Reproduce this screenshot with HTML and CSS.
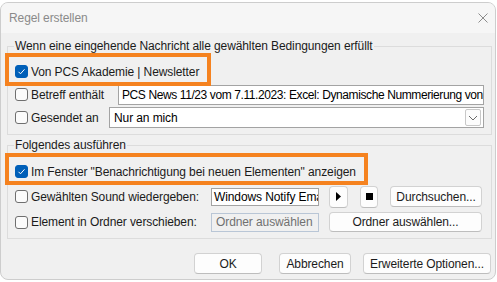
FILE: index.html
```html
<!DOCTYPE html>
<html lang="de">
<head>
<meta charset="utf-8">
<title>Regel erstellen</title>
<link rel="stylesheet" href="styles.css">
</head>
<body>
<div class="window">
  <div class="titlebar">
    <span class="title">Regel erstellen</span>
    <svg class="close" width="10" height="10" viewBox="0 0 10 10"><path d="M0.5 0.5 L9.5 9.5 M9.5 0.5 L0.5 9.5" stroke="#8c8c8c" stroke-width="1" fill="none"/></svg>
  </div>
  <div class="content">
    <fieldset class="group g1">
      <legend>Wenn eine eingehende Nachricht alle gewählten Bedingungen erfüllt</legend>
      <div class="row">
        <span class="cb checked"><svg width="13" height="13" viewBox="0 0 13 13"><path d="M3.5 6.8 L5.5 8.8 L9.5 4.3" stroke="#fff" stroke-width="1" fill="none"/></svg></span>
        <span class="label">Von PCS Akademie | Newsletter</span>
      </div>
      <div class="row">
        <span class="cb"></span>
        <span class="label w-betreff">Betreff enthält</span>
        <div class="textbox tb-betreff">PCS News 11/23 vom 7.11.2023: Excel: Dynamische Nummerierung von Zeilen</div>
      </div>
      <div class="row">
        <span class="cb"></span>
        <span class="label w-gesendet">Gesendet an</span>
        <div class="combo">
          <span class="combo-text">Nur an mich</span>
          <span class="dd"><svg width="10" height="6" viewBox="0 0 10 6"><path d="M1 1 L5 5 L9 1" stroke="#6a6a6a" stroke-width="1" fill="none"/></svg></span>
        </div>
      </div>
    </fieldset>
    <fieldset class="group g2">
      <legend>Folgendes ausführen</legend>
      <div class="row">
        <span class="cb checked"><svg width="13" height="13" viewBox="0 0 13 13"><path d="M3.5 6.8 L5.5 8.8 L9.5 4.3" stroke="#fff" stroke-width="1" fill="none"/></svg></span>
        <span class="label">Im Fenster "Benachrichtigung bei neuen Elementen" anzeigen</span>
      </div>
      <div class="row row-sound">
        <span class="cb"></span>
        <span class="label w-action">Gewählten Sound wiedergeben:</span>
        <div class="textbox tb-small">Windows Notify Email</div>
        <button class="btn btn-icon btn-play"><svg width="5" height="9" viewBox="0 0 5 9"><path d="M0 0 L5 4.5 L0 9 Z" fill="#000"/></svg></button>
        <button class="btn btn-icon btn-stop"><span class="stop-sq"></span></button>
        <button class="btn btn-browse">Durchsuchen...</button>
      </div>
      <div class="row row-folder">
        <span class="cb"></span>
        <span class="label w-action">Element in Ordner verschieben:</span>
        <div class="textbox tb-small disabled">Ordner auswählen</div>
        <button class="btn btn-folder">Ordner auswählen...</button>
      </div>
    </fieldset>
    <div class="buttons">
      <button class="btn btn-ok">OK</button>
      <button class="btn btn-cancel">Abbrechen</button>
      <button class="btn btn-adv">Erweiterte Optionen...</button>
    </div>
  </div>
  <div class="highlight hl-1"></div>
  <div class="highlight hl-2"></div>
</div>
</body>
</html>
```
FILE: styles.css
```css
* { box-sizing: border-box; }
html, body { margin: 0; padding: 0; background: #ffffff; }
body {
  font-family: "Liberation Sans", Arial, sans-serif;
  font-size: 12px;
  letter-spacing: -0.1px;
  color: #1b1b1b;
}
.window {
  position: relative;
  margin-top: 2px;
  width: 496px;
  height: 278px;
  border: 1px solid #cdcdcd;
  border-radius: 8px;
  background: #f0f0f0;
  overflow: hidden;
}
.titlebar {
  height: 30px;
  background: #f6f6f6;
  display: flex;
  align-items: center;
  justify-content: space-between;
  padding: 0 7px 0 8px;
}
.title { color: #8a8a8a; font-size: 12px; }
.close { display: block; }
.content { padding: 5px 3px 0 6px; }
.group {
  margin: 0;
  border: 1px solid #dcdcdc;
  min-width: 0;
}
.group legend {
  padding: 0 1px;
  margin-left: -1px;
  line-height: 16px;
}
.g1 { padding: 6px 7px 5px 7px; }
.g2 { margin-top: 2px; padding: 7px 7px 6px 7px; }
.row {
  display: flex;
  align-items: center;
  height: 23px;
}
.row-sound { height: 21px; margin-top: 3px; }
.row-folder { height: 20px; margin-top: 5px; }
.cb {
  flex: none;
  width: 13px;
  height: 13px;
  border: 1px solid #6f6f6f;
  border-radius: 3px;
  background: #fbfbfb;
  margin-right: 3px;
  display: flex;
}
.cb.checked { border-color: #005fb8; background: #005fb8; }
.cb svg { display: block; margin: -1px; }
.label { white-space: nowrap; flex: none; }
.w-betreff { width: 87px; }
.w-gesendet { width: 78px; }
.w-action { width: 180px; }
.textbox {
  height: 20px;
  border: 1px solid #a3a3a3;
  background: #ffffff;
  padding: 0 3px;
  line-height: 18px;
  white-space: nowrap;
  overflow: hidden;
  color: #000;
}
.tb-betreff { flex: 1; letter-spacing: -0.4px; }
.tb-small { width: 108px; height: 18px; line-height: 16px; padding: 0 2px; }
.textbox.disabled {
  height: 19px;
  border-color: #b9c6d6;
  background: #f0f0f0;
  color: #707070;
  padding-left: 4px;
}
.combo {
  flex: 1;
  height: 21px;
  border: 1px solid #a3a3a3;
  background: #ffffff;
  display: flex;
  align-items: center;
  justify-content: space-between;
  padding: 0 2px 0 4px;
  color: #000;
}
.dd {
  width: 16px;
  height: 17px;
  border: 1px solid #c8c8c8;
  border-radius: 2px;
  background: #fcfcfc;
  display: flex;
  align-items: center;
  justify-content: center;
}
.dd svg { display: block; }
.btn {
  font-family: inherit;
  font-size: 12px;
  letter-spacing: -0.1px;
  color: #1b1b1b;
  background: #fdfdfd;
  border: 1px solid #d2d2d2;
  border-bottom-color: #bdbdbd;
  border-radius: 4px;
  padding: 0;
  height: 21px;
  display: flex;
  align-items: center;
  justify-content: center;
  flex: none;
}
.btn-icon { height: 22px; }
.btn-play { width: 19px; margin-left: 10px; }
.btn-stop { width: 18px; margin-left: 12px; }
.stop-sq { width: 7px; height: 7px; background: #000; display: block; }
.btn-browse { width: 92px; margin-left: 12px; }
.btn-folder { width: 153px; height: 20px; margin-left: 10px; }
.buttons {
  display: flex;
  justify-content: flex-end;
  margin-top: 14px;
  margin-right: 1px;
}
.btn-ok { width: 68px; }
.btn-cancel { width: 72px; margin-left: 17px; }
.btn-adv { width: 128px; margin-left: 12px; }
.highlight {
  position: absolute;
  border: 4px solid #f5821f;
}
.hl-1 { left: 4px; top: 50px; width: 206px; height: 33px; }
.hl-2 { left: 4px; top: 150px; width: 363px; height: 32px; }
```
